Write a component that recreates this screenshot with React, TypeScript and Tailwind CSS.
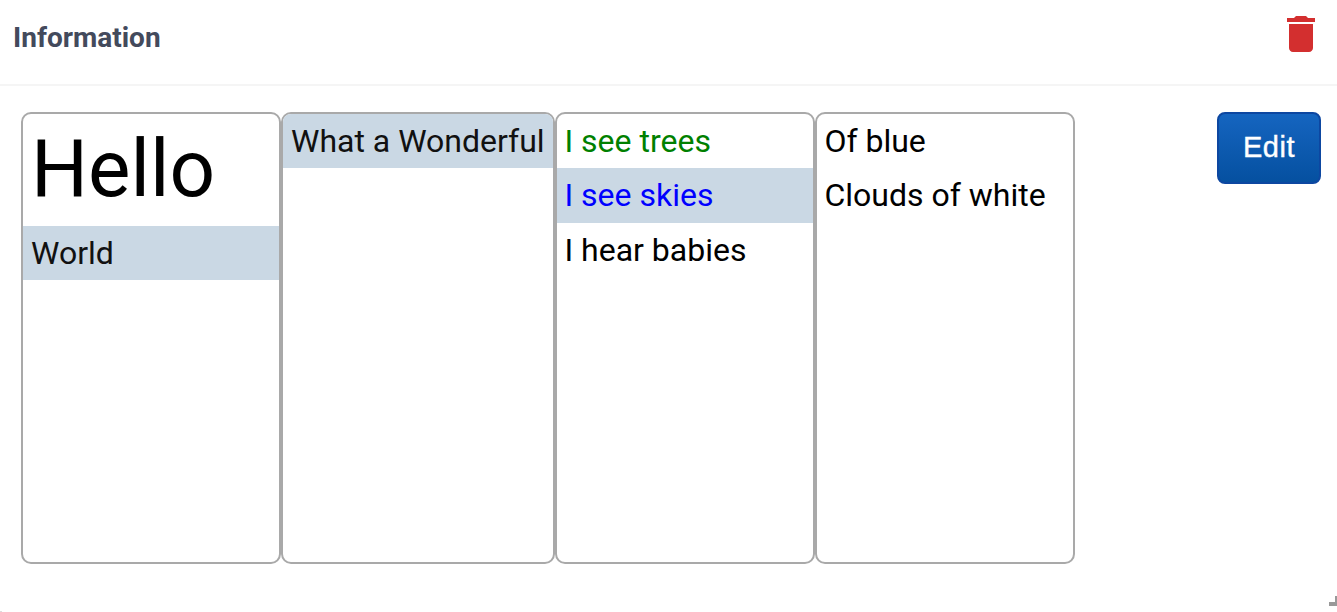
type Item = { label: string; className?: string; selected?: boolean };

const columns: { width: string; indent: string; items: Item[] }[] = [
  {
    width: "w-[260px]",
    indent: "pl-2",
    items: [
      { label: "Hello", className: "h-[112px] text-[80px] leading-[110px]" },
      { label: "World", className: "h-[54px] text-[32px] leading-[54px] text-[#111]", selected: true },
    ],
  },
  {
    width: "w-[274px]",
    indent: "pl-2",
    items: [
      { label: "What a Wonderful", className: "h-[54px] text-[32px] leading-[54px] text-[#111]", selected: true },
    ],
  },
  {
    width: "w-[260px]",
    indent: "pl-[7.4px]",
    items: [
      { label: "I see trees", className: "h-[54px] text-[32px] leading-[54px] text-[#008000]" },
      { label: "I see skies", className: "h-[55px] text-[32px] leading-[54px] text-[#0000ff]", selected: true },
      { label: "I hear babies", className: "h-[54px] text-[32px] leading-[54px]" },
    ],
  },
  {
    width: "w-[260px]",
    indent: "pl-[7.4px]",
    items: [
      { label: "Of blue", className: "h-[54px] text-[32px] leading-[54px]" },
      { label: "Clouds of white", className: "h-[54px] text-[32px] leading-[54px]" },
    ],
  },
];

function Column({ width, indent, items }: { width: string; indent: string; items: Item[] }) {
  return (
    <ul className={`h-[452px] shrink-0 overflow-hidden rounded-[10px] border-2 border-[#a9a9a9] bg-white ${width}`}>
      {items.map((item) => (
        <li
          key={item.label}
          className={`whitespace-nowrap ${indent} ${item.selected ? "bg-[#cad8e4]" : ""} ${item.className ?? ""}`}
        >
          {item.label}
        </li>
      ))}
    </ul>
  );
}

export default function App() {
  return (
    <div className="relative flex h-[612px] w-[1337px] flex-col overflow-hidden bg-white font-['Roboto',sans-serif] text-black">
      <header className="flex h-[86px] shrink-0 items-start justify-between border-b-2 border-[#f5f5f5] pl-[13px] pr-3 pt-[10px]">
        <h1 className="pt-2 text-[28px] font-bold leading-10 text-[#434a5c]">Information</h1>
        <button aria-label="Delete">
          <svg className="size-12" viewBox="0 0 24 24" fill="#d32f2f">
            <path d="M6 19c0 1.1.9 2 2 2h8c1.1 0 2-.9 2-2V7H6v12zM19 4h-3.5l-1-1h-5l-1 1H5v2h14V4z" />
          </svg>
        </button>
      </header>
      <main className="flex items-start justify-between pl-[21px] pr-4 pt-[26px]">
        <div className="flex">
          {columns.map((column, i) => (
            <Column key={i} {...column} />
          ))}
        </div>
        <button className="h-[72px] w-[104px] rounded-lg border-2 border-[#0d47a1] bg-linear-to-b from-[#1565c0] to-[#0550a0] pb-[2px] font-['Liberation_Sans',Arial,sans-serif] text-[29px] leading-none tracking-[0.5px] text-white [-webkit-text-stroke:0.4px_white]">
          Edit
        </button>
      </main>
      <svg className="absolute right-0 top-[596px] h-[10px] w-2" viewBox="0 0 8 10" fill="#999">
        <path d="M6 0h2v10H0V6h6z" />
      </svg>
      <div className="absolute bottom-0 left-0 h-px w-[2px] bg-[#ddd]" />
    </div>
  );
}
